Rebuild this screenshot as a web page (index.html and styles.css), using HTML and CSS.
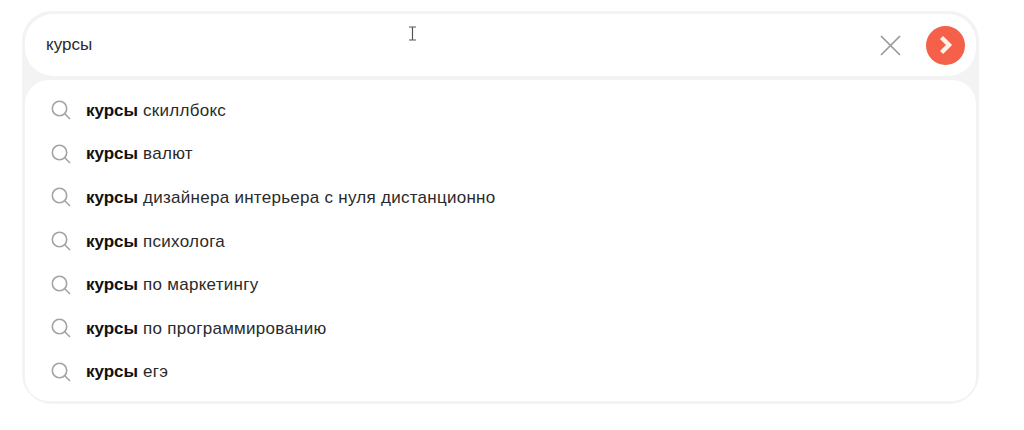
FILE: index.html
```html
<!DOCTYPE html>
<html lang="ru">
  <head>
    <meta charset="UTF-8" />
    <title>Поиск</title>
    <link rel="stylesheet" href="styles.css">
  </head>
  <body>
    <main class="search">
      <div class="search-bar">
        <span class="query">курсы</span>
        <svg class="clear" width="24" height="24" viewBox="0 0 24 24">
          <path d="M3 3 L22 22 M22 3 L3 22" />
        </svg>
        <button class="go">
          <svg width="14" height="20" viewBox="0 0 14 20">
            <path d="M2.5 2.5 L10 10 L2.5 17.5" />
          </svg>
        </button>
      </div>
      <ul class="suggestions">
        <li><svg class="loupe" viewBox="0 0 20 20"><circle cx="8.5" cy="8.5" r="7.2" /><path d="M13.8 13.8 L19 19" /></svg><span><b>курсы</b> скиллбокс</span></li>
        <li><svg class="loupe" viewBox="0 0 20 20"><circle cx="8.5" cy="8.5" r="7.2" /><path d="M13.8 13.8 L19 19" /></svg><span><b>курсы</b> валют</span></li>
        <li><svg class="loupe" viewBox="0 0 20 20"><circle cx="8.5" cy="8.5" r="7.2" /><path d="M13.8 13.8 L19 19" /></svg><span><b>курсы</b> дизайнера интерьера с нуля дистанционно</span></li>
        <li><svg class="loupe" viewBox="0 0 20 20"><circle cx="8.5" cy="8.5" r="7.2" /><path d="M13.8 13.8 L19 19" /></svg><span><b>курсы</b> психолога</span></li>
        <li><svg class="loupe" viewBox="0 0 20 20"><circle cx="8.5" cy="8.5" r="7.2" /><path d="M13.8 13.8 L19 19" /></svg><span><b>курсы</b> по маркетингу</span></li>
        <li><svg class="loupe" viewBox="0 0 20 20"><circle cx="8.5" cy="8.5" r="7.2" /><path d="M13.8 13.8 L19 19" /></svg><span><b>курсы</b> по программированию</span></li>
        <li><svg class="loupe" viewBox="0 0 20 20"><circle cx="8.5" cy="8.5" r="7.2" /><path d="M13.8 13.8 L19 19" /></svg><span><b>курсы</b> егэ</span></li>
      </ul>
      <svg class="cursor" width="9" height="15" viewBox="0 0 9 15">
        <path d="M1 1 H8 M1 14 H8 M4.5 1 V14" />
      </svg>
    </main>
  </body>
</html>
```

FILE: styles.css
```css
* {
  box-sizing: border-box;
  margin: 0;
  padding: 0;
}
html, body {
  background: #fff;
  overflow: hidden;
}
body {
  height: 430px;
  padding: 11px 45px 0 22px;
  font-family: "Liberation Sans", Arial, sans-serif;
  font-size: 17px;
  color: #2a2a2a;
}
.search {
  position: relative;
  height: 393px;
  display: flex;
  flex-direction: column;
  gap: 4px;
  background: #f3f3f3;
  border: 3px solid #f3f3f3;
  border-radius: 30px;
}
.search-bar {
  height: 62px;
  display: flex;
  align-items: center;
  padding: 0 11px 0 21px;
  background: #fff;
  border-radius: 28px;
}
.query {
  flex: 1;
}
.clear {
  margin-right: 24px;
}
.clear path {
  fill: none;
  stroke: #999;
  stroke-width: 1.7;
}
.go {
  width: 39px;
  height: 39px;
  display: flex;
  align-items: center;
  justify-content: center;
  border: none;
  border-radius: 50%;
  background: #f4604a;
}
.go path {
  fill: none;
  stroke: #fdf1e8;
  stroke-width: 4.4;
}
.suggestions {
  flex: 1;
  list-style: none;
  padding: 9px 0 0 26px;
  background: #fff;
  border-radius: 24px;
  letter-spacing: 0.27px;
}
.suggestions li {
  height: 43.6px;
  display: flex;
  align-items: center;
  gap: 15px;
}
.loupe {
  width: 20px;
  height: 20px;
  flex: none;
  margin-top: -1px;
}
.loupe circle, .loupe path {
  fill: none;
  stroke: #a3a3a3;
  stroke-width: 1.6;
}
.suggestions b {
  color: #111;
  letter-spacing: 0;
}
.cursor {
  position: absolute;
  top: 12px;
  left: 383px;
}
.cursor path {
  fill: none;
  stroke: #555;
  stroke-width: 1.2;
}
```
